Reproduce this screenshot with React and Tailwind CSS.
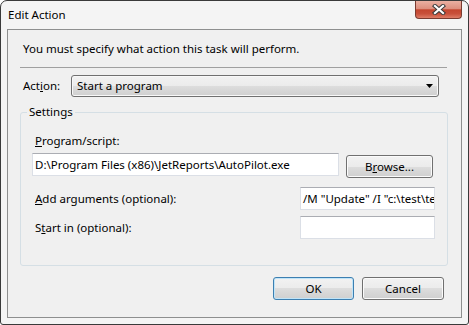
import React from 'react';

const btnBg =
  'bg-[linear-gradient(to_bottom,#f2f2f2_0%,#ebebeb_50%,#dddddd_50%,#cfcfcf_100%)]';

function Button({ children, isDefault, className }) {
  return (
    <div
      className={
        isDefault
          ? `flex items-center justify-center h-[23px] rounded-[3px] border border-[#3c7fb1] shadow-[inset_0_0_0_1px_#c0e4f8] bg-[linear-gradient(to_bottom,#f2f2f2_0%,#ebebeb_50%,#dddddd_50%,#cfcfcf_100%)] ${className}`
          : `flex items-center justify-center h-[23px] rounded-[3px] border border-[#707070] shadow-[inset_0_0_0_1px_#fbfbfb] bg-[linear-gradient(to_bottom,#f2f2f2_0%,#ebebeb_50%,#dddddd_50%,#cfcfcf_100%)] ${className}`
      }
    >
      {children}
    </div>
  );
}

function TextBox({ value, className }) {
  return (
    <div
      className={`h-[23px] bg-white border border-[#dbdfe6] border-t-[#abadb3] pl-[2px] flex items-center overflow-hidden whitespace-nowrap ${className}`}
    >
      {value}
    </div>
  );
}

export default function App() {
  return (
    <div className="w-[469px] h-[325px] bg-white text-[11.5px] leading-[16px] text-black font-['Noto_Sans',sans-serif]">
      <div className="w-full h-full rounded-t-[7px] rounded-b-[3px] border border-[#3a3a3a] bg-[#f4f4f4] flex flex-col">
        {/* Title bar */}
        <div className="flex h-[28px]">
          <div className="pl-[7px] pt-[6px]">Edit Action</div>
          <div className="ml-auto mr-[6px] w-[47px] h-[18px] rounded-b-[4px] border border-t-0 border-[#7a3b30] bg-[linear-gradient(to_bottom,#eab0a2_0%,#dd8f7e_45%,#c4462f_52%,#c8503a_75%,#de7c66_100%)] flex items-center justify-center">
            <svg width="14" height="11" viewBox="0 0 14 11">
              <path d="M3 2 L11 9 M11 2 L3 9" stroke="#3b3b3b" strokeWidth="4.2" strokeLinecap="square" />
              <path d="M3 2 L11 9 M11 2 L3 9" stroke="#ffffff" strokeWidth="2.2" strokeLinecap="square" />
            </svg>
          </div>
        </div>

        {/* Client area */}
        <div className="ml-[6px] w-[455px] h-[289px] border border-[#8e8f8f] bg-[#f0f0f0] flex flex-col pl-[12px]">
          <div className="mt-[11px] ml-[3px]">You must specify what action this task will perform.</div>
          <div className="mt-[10px] w-[427px] h-px bg-[#a0a0a0]" />

          <div className="mt-[7px] flex items-center h-[22px]">
            <span className="ml-[3px] w-[48px]">
              Act<u>i</u>on:
            </span>
            <div className={`w-[368px] h-[22px] rounded-[3px] border border-[#707070] shadow-[inset_0_0_0_1px_#f8f8f8] ${btnBg} flex items-center pl-[5px] pr-[5px]`}>
              <span>Start a program</span>
              <svg className="ml-auto" width="7" height="4" viewBox="0 0 7 4">
                <path d="M0 0 H7 L3.5 4 Z" fill="#000" />
              </svg>
            </div>
          </div>

          {/* Settings group */}
          <fieldset className="mt-[7px] w-[428px] h-[162px] border border-[#d5dfe5] rounded-[3px]">
            <legend className="ml-[6px] px-[2px]">Settings</legend>
            <div className="mt-[13px] ml-[14px]">
              <u>P</u>rogram/script:
            </div>
            <div className="mt-[4px] ml-[11px] flex items-start">
              <TextBox className="w-[307px]" value="D:\Program Files (x86)\JetReports\AutoPilot.exe" />
              <Button className="ml-[7px] mt-[2px] w-[87px] h-[22px]">
                <span>
                  B<u>r</u>owse...
                </span>
              </Button>
            </div>
            <div className="mt-[9px] ml-[14px] flex items-center">
              <span className="w-[265px]">
                <u>A</u>dd arguments (optional):
              </span>
              <TextBox className="w-[135px]" value={'/M "Update" /I "c:\\test\\test.xlsx"'} />
            </div>
            <div className="mt-[6px] ml-[14px] flex items-center">
              <span className="w-[265px]">
                S<u>t</u>art in (optional):
              </span>
              <TextBox className="w-[135px]" value="" />
            </div>
          </fieldset>

          <div className="mt-[11px] w-[428px] pr-[4px] flex justify-end gap-[8px]">
            <Button isDefault className="w-[81px]">OK</Button>
            <Button className="w-[82px]">Cancel</Button>
          </div>
        </div>
      </div>
    </div>
  );
}
